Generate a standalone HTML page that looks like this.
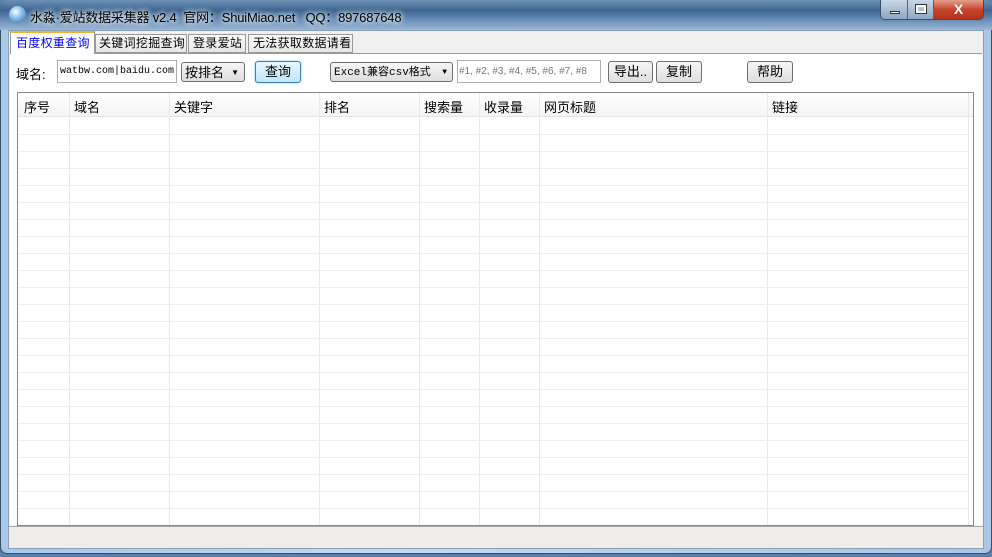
<!DOCTYPE html>
<html><head><meta charset="utf-8"><style>
*{margin:0;padding:0;box-sizing:border-box}
body{width:992px;height:557px;overflow:hidden;background:#5a7fa8;font-family:"Liberation Sans","Noto Sans CJK SC",sans-serif;font-size:12px;color:#000;position:relative}
.abs{position:absolute}
.win{left:0;top:0;width:992px;height:554px;border-radius:7px;background:linear-gradient(90deg,#a9c8e8,#c3d9ef 40%,#b6d0ea 70%,#a9c6e6);border:1px solid #3a4f66}
.title{left:0;top:0;width:992px;height:30px;border-radius:7px 7px 0 0;background:linear-gradient(180deg,#6d8fb5 0%,#3e6590 35%,#5f86b0 60%,#9ab8d8 100%)}
.client{left:8px;top:30px;width:976px;height:519px;background:#f0f0f0;border:1px solid #8aa0b8}
.btn{background:linear-gradient(#f6f6f6,#dedede);border:1px solid #707070;border-radius:3px;text-align:center;font-size:13px;line-height:20px}
.tab{background:linear-gradient(#fafafa,#e6e6e6);border:1px solid #999;font-size:12px;line-height:17px;padding-left:3px;white-space:nowrap;letter-spacing:.3px}
</style></head><body>
<div class="abs win"></div>
<div class="abs title"></div>
<div class="abs" style="left:9px;top:6px;width:17px;height:17px;border-radius:50%;background:radial-gradient(circle at 40% 35%,#fff,#8ec1ef 40%,#2c6aa8)"></div>
<div class="abs" style="left:30px;top:7px;font-size:13px;color:#000;white-space:nowrap;text-shadow:0 0 6px #fff,0 0 6px #fff;letter-spacing:-.2px">水淼·爱站数据采集器 v2.4 &nbsp;官网：ShuiMiao.net &nbsp; QQ：897687648</div>
<div class="abs" style="left:880px;top:0;width:104px;height:20px;border:1px solid #3a4f66;border-top:none;border-radius:0 0 5px 5px;overflow:hidden;display:flex">
 <div style="width:27px;background:linear-gradient(#c9d7e6,#8ea6c2);border-right:1px solid #4d6480;position:relative"><div class="abs" style="left:9px;top:11px;width:10px;height:3px;background:#fff;border:1px solid #333"></div></div>
 <div style="width:26px;background:linear-gradient(#c9d7e6,#8ea6c2);border-right:1px solid #4d6480;position:relative"><div class="abs" style="left:8px;top:5px;width:10px;height:8px;border:2px solid #fff;outline:1px solid #333"></div></div>
 <div style="flex:1;background:linear-gradient(#e5a08e,#c7452d 50%,#b5321a);color:#fff;font-weight:bold;font-size:14px;text-align:center;line-height:18px">X</div>
</div>
<div class="abs client"></div>
<div class="abs" style="left:10px;top:53px;width:972px;height:472px;background:#fff;border-top:1px solid #999"></div>
<!-- tabs -->
<div class="abs" style="left:10px;top:31px;width:85px;height:23px;background:#fff;border:1px solid #999;border-bottom:none;border-top:2px solid #f5b030;color:#0000ff;font-size:12px;line-height:20px;padding-left:5px;white-space:nowrap;letter-spacing:.3px">百度权重查询</div>
<div class="abs tab" style="left:95px;top:34px;width:92px;height:19px">关键词挖掘查询</div>
<div class="abs tab" style="left:188px;top:34px;width:58px;height:19px;padding-left:4px">登录爱站</div>
<div class="abs tab" style="left:248px;top:34px;width:105px;height:19px;padding-left:4px">无法获取数据请看</div>
<!-- controls -->
<div class="abs" style="left:16px;top:64px;font-size:13px">域名:</div>
<div class="abs" style="left:57px;top:60px;width:120px;height:23px;background:#fff;border:1px solid #abadb3;font-family:'Liberation Mono',monospace;font-size:10px;line-height:21px;padding-left:2px;white-space:nowrap;overflow:hidden">watbw.com|baidu.com</div>
<div class="abs btn" style="left:181px;top:62px;width:64px;height:20px;text-align:left;padding-left:3px">按排名<span style="position:absolute;right:5px;font-size:8px">▼</span></div>
<div class="abs btn" style="left:255px;top:61px;width:46px;height:22px;border-color:#3c7fb1;background:linear-gradient(#eaf6fd,#bee6fd);box-shadow:0 0 2px #6cf">查询</div>
<div class="abs btn" style="left:330px;top:62px;width:123px;height:20px;text-align:left;padding-left:3px;font-family:'Liberation Mono','Noto Sans CJK SC',monospace;font-size:11px">Excel兼容csv格式<span style="position:absolute;right:5px;font-size:8px">▼</span></div>
<div class="abs" style="left:457px;top:60px;width:144px;height:23px;background:#fff;border:1px solid #abadb3;font-size:10px;color:#777;line-height:21px;padding-left:1px;white-space:nowrap;overflow:hidden">#1, #2, #3, #4, #5, #6, #7, #8</div>
<div class="abs btn" style="left:608px;top:61px;width:45px;height:22px">导出..</div>
<div class="abs btn" style="left:656px;top:61px;width:46px;height:22px">复制</div>
<div class="abs btn" style="left:747px;top:61px;width:46px;height:22px">帮助</div>
<!-- list -->
<div class="abs" style="left:17px;top:92px;width:957px;height:434px;border:1px solid #828790;background:#fff;overflow:hidden">
<svg width="957" height="434" style="position:absolute;left:0;top:0">
<defs><linearGradient id="g" x1="0" y1="0" x2="0" y2="1"><stop offset="0" stop-color="#fff"/><stop offset="1" stop-color="#f3f4f6"/></linearGradient></defs>
<rect x="0" y="0" width="957" height="24" fill="url(#g)"/>
<line x1="0" y1="23.5" x2="957" y2="23.5" stroke="#e3e5e8"/>
<g stroke="#e8e8e8">
<line x1="51.5" y1="0" x2="51.5" y2="434"/><line x1="151.5" y1="0" x2="151.5" y2="434"/><line x1="301.5" y1="0" x2="301.5" y2="434"/><line x1="401.5" y1="0" x2="401.5" y2="434"/><line x1="461.5" y1="0" x2="461.5" y2="434"/><line x1="521.5" y1="0" x2="521.5" y2="434"/><line x1="749.5" y1="0" x2="749.5" y2="434"/><line x1="950.5" y1="0" x2="950.5" y2="434"/>
</g>
<g stroke="#efefef">
<line x1="0" x2="951" y1="41.5" y2="41.5"/><line x1="0" x2="951" y1="58.5" y2="58.5"/><line x1="0" x2="951" y1="75.5" y2="75.5"/><line x1="0" x2="951" y1="92.5" y2="92.5"/><line x1="0" x2="951" y1="109.5" y2="109.5"/><line x1="0" x2="951" y1="126.5" y2="126.5"/><line x1="0" x2="951" y1="143.5" y2="143.5"/><line x1="0" x2="951" y1="160.5" y2="160.5"/><line x1="0" x2="951" y1="177.5" y2="177.5"/><line x1="0" x2="951" y1="194.5" y2="194.5"/><line x1="0" x2="951" y1="211.5" y2="211.5"/><line x1="0" x2="951" y1="228.5" y2="228.5"/><line x1="0" x2="951" y1="245.5" y2="245.5"/><line x1="0" x2="951" y1="262.5" y2="262.5"/><line x1="0" x2="951" y1="279.5" y2="279.5"/><line x1="0" x2="951" y1="296.5" y2="296.5"/><line x1="0" x2="951" y1="313.5" y2="313.5"/><line x1="0" x2="951" y1="330.5" y2="330.5"/><line x1="0" x2="951" y1="347.5" y2="347.5"/><line x1="0" x2="951" y1="364.5" y2="364.5"/><line x1="0" x2="951" y1="381.5" y2="381.5"/><line x1="0" x2="951" y1="398.5" y2="398.5"/><line x1="0" x2="951" y1="415.5" y2="415.5"/>
</g>
</svg>
<div class="abs" style="left:6px;top:4px;font-size:13px">序号</div>
<div class="abs" style="left:56px;top:4px;font-size:13px">域名</div>
<div class="abs" style="left:156px;top:4px;font-size:13px">关键字</div>
<div class="abs" style="left:306px;top:4px;font-size:13px">排名</div>
<div class="abs" style="left:406px;top:4px;font-size:13px">搜索量</div>
<div class="abs" style="left:466px;top:4px;font-size:13px">收录量</div>
<div class="abs" style="left:526px;top:4px;font-size:13px">网页标题</div>
<div class="abs" style="left:754px;top:4px;font-size:13px">链接</div>
</div>
<!-- status -->
<div class="abs" style="left:9px;top:526px;width:974px;height:22px;background:#efecea;border-top:1px solid #aaa"></div>
</body></html>
